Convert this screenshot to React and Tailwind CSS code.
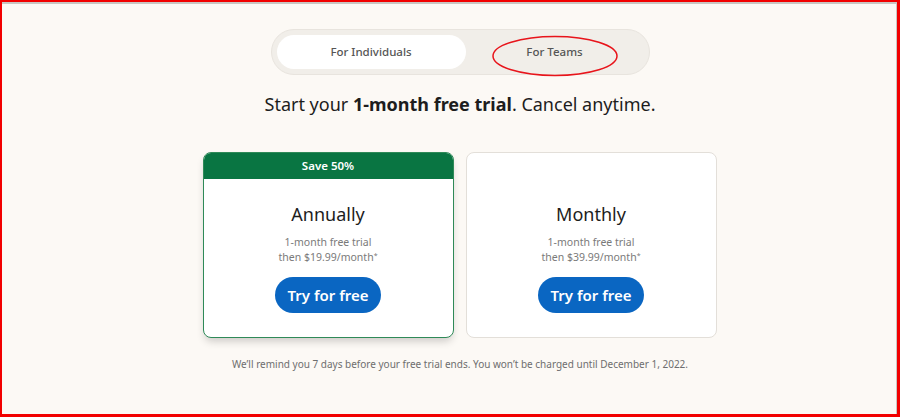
import { useState } from 'react'

const plans = [
  { id: 'annual', name: 'Annually', price: '$19.99', badge: 'Save 50%' },
  { id: 'monthly', name: 'Monthly', price: '$39.99', badge: null },
]

function PlanCard({ plan }) {
  const featured = Boolean(plan.badge)
  return (
    <div
      className={`w-[251px] h-[186px] flex flex-col items-center rounded-lg bg-white overflow-hidden border ${
        featured
          ? 'border-[#2f8a58] shadow-[0_5px_9px_-2px_rgba(0,0,0,0.2)]'
          : 'border-[#e3dfd9]'
      }`}
    >
      {featured ? (
        <div className="w-full h-[26px] flex items-center justify-center bg-[#097542] text-white text-[11.5px] font-semibold">
          {plan.badge}
        </div>
      ) : (
        <div className="h-[26px]" />
      )}
      <h2 className="mt-[21px] text-[18px] leading-[28px] text-[#1d1d1d]">{plan.name}</h2>
      <p className="mt-[7px] text-[10.5px] leading-[15px] text-[#7a7a7a] text-center">
        1-month free trial
        <br />
        then {plan.price}/month<sup className="text-[7px]">*</sup>
      </p>
      <button className="mt-[12px] h-[36px] w-[106px] rounded-full bg-[#0a66c2] text-white text-[15px] font-semibold">
        Try for free
      </button>
    </div>
  )
}

export default function App() {
  const [tab, setTab] = useState('individuals')

  return (
    <div
      className="w-[900px] h-[417px] border-t-2 border-l-2 border-r-[3px] border-b-[3px] border-[#f20000] bg-[#fcf9f5]"
      style={{ fontFamily: '"Noto Sans", "Open Sans", sans-serif' }}
    >
      <div className="h-full border-t-2 border-r border-[#c9c6c2] flex flex-col items-center pt-[25px] pl-[22px]">
        {/* Toggle */}
        <div className="relative w-[379px] h-[46px] p-[5px] flex rounded-full bg-[#f1eee9] border border-[#e8e4de]">
          <button
            onClick={() => setTab('individuals')}
            className={`w-[189px] h-full rounded-full text-[11.5px] font-medium text-[#555] ${
              tab === 'individuals' ? 'bg-white' : ''
            }`}
          >
            For Individuals
          </button>
          <button
            onClick={() => setTab('teams')}
            className={`flex-1 h-full rounded-full text-[11.5px] font-medium text-[#555] ${
              tab === 'teams' ? 'bg-white' : ''
            }`}
          >
            For Teams
          </button>
          {/* annotation ellipse */}
          <svg
            className="absolute left-[219px] top-[5px] pointer-events-none"
            width="128"
            height="42"
            viewBox="0 0 128 42"
          >
            <ellipse cx="64" cy="21" rx="62" ry="19.5" fill="none" stroke="#e8141b" strokeWidth="1.5" />
          </svg>
        </div>

        <h1 className="mt-[15px] text-[18px] leading-[28px] text-[#1d1d1d]">
          Start your <span className="font-bold">1-month free trial</span>. Cancel anytime.
        </h1>

        {/* Plans */}
        <div className="mt-[34px] flex gap-[12px] ml-[-1px]">
          {plans.map(plan => (
            <PlanCard key={plan.id} plan={plan} />
          ))}
        </div>

        <p className="mt-[19px] text-[10px] text-[#6e6e6e]">
          We’ll remind you 7 days before your free trial ends. You won’t be charged until December 1, 2022.
        </p>
      </div>
    </div>
  )
}
